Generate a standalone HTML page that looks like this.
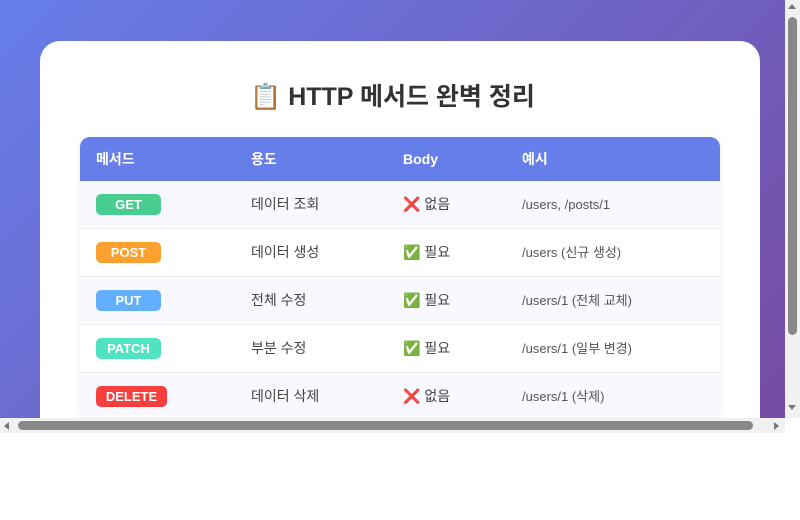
<!DOCTYPE html>
<html><head><meta charset="utf-8"><style>
*{margin:0;padding:0;box-sizing:border-box}
body{width:800px;height:520px;background:#fff;position:relative;overflow:hidden;font-family:"Liberation Sans","Noto Sans CJK KR",sans-serif}
.vp{position:absolute;left:0;top:0;width:785px;height:418px;overflow:hidden;background:linear-gradient(135deg,#667eea,#764ba2)}
.card{position:absolute;left:40px;top:41px;width:720px;height:420px;background:#fff;border-radius:20px}
h1{position:absolute;left:0;right:0;top:80px;text-align:center;font-size:25px;font-weight:bold;color:#333;line-height:34px}
.tbl{position:absolute;left:80px;top:137px;width:640px;border-radius:10px;overflow:hidden;box-shadow:0 2px 8px rgba(0,0,0,.08)}
.row{height:48px;position:relative;border-bottom:1px solid #eee;font-size:14px;color:#444}
.row.hd{height:44px;background:#667eea;color:#fff;font-weight:bold;border:none}
.row:nth-child(even){background:#f8f8fe}
.c{position:absolute;top:0;line-height:47px}
.hd .c{line-height:44px}
.c1{left:16px}.c2{left:171px}.c3{left:323px}.c4{left:442px;font-size:13px;color:#555}
.b{position:absolute;left:16px;top:13px;width:65px;height:21px;border-radius:5px;color:#fff;font-weight:bold;font-size:13px;text-align:center;line-height:22px}
.vs{position:absolute;left:785px;top:0;width:15px;height:418px;background:#f1f1f1}
.vt{position:absolute;left:788px;top:17px;width:9px;height:318px;background:#888;border-radius:5px}
.hs{position:absolute;left:0;top:418px;width:785px;height:15px;background:#f1f1f1}
.ht{position:absolute;left:18px;top:421px;width:735px;height:9px;background:#888;border-radius:5px}
.corner{position:absolute;left:785px;top:418px;width:15px;height:15px;background:#fff}
</style></head><body>
<div class="vp">
<div class="card"></div>
<h1>📋 HTTP 메서드 완벽 정리</h1>
<div class="tbl">
<div class="row hd"><span class="c c1">메서드</span><span class="c c2">용도</span><span class="c c3">Body</span><span class="c c4" style="color:#fff;font-size:14px">예시</span></div>
<div class="row"><span class="b" style="background:#49cc90">GET</span><span class="c c2">데이터 조회</span><span class="c c3">❌ 없음</span><span class="c c4">/users, /posts/1</span></div>
<div class="row"><span class="b" style="background:#fca130">POST</span><span class="c c2">데이터 생성</span><span class="c c3">✅ 필요</span><span class="c c4">/users (신규 생성)</span></div>
<div class="row"><span class="b" style="background:#61affe">PUT</span><span class="c c2">전체 수정</span><span class="c c3">✅ 필요</span><span class="c c4">/users/1 (전체 교체)</span></div>
<div class="row"><span class="b" style="background:#50e3c2">PATCH</span><span class="c c2">부분 수정</span><span class="c c3">✅ 필요</span><span class="c c4">/users/1 (일부 변경)</span></div>
<div class="row"><span class="b" style="background:#f93e3e;width:71px">DELETE</span><span class="c c2">데이터 삭제</span><span class="c c3">❌ 없음</span><span class="c c4">/users/1 (삭제)</span></div>
</div>
</div>
<div class="vs"></div><div class="vt"></div>
<div style="position:absolute;left:788px;top:4px;border:4px solid transparent;border-bottom:5px solid #777;border-top:0"></div>
<div style="position:absolute;left:788px;top:405px;border:4px solid transparent;border-top:5px solid #777;border-bottom:0"></div>
<div class="hs"></div><div class="ht"></div>
<div style="position:absolute;left:4px;top:422px;border:4px solid transparent;border-right:5px solid #777;border-left:0"></div>
<div style="position:absolute;left:774px;top:422px;border:4px solid transparent;border-left:5px solid #777;border-right:0"></div>
<div class="corner"></div>
</body></html>
